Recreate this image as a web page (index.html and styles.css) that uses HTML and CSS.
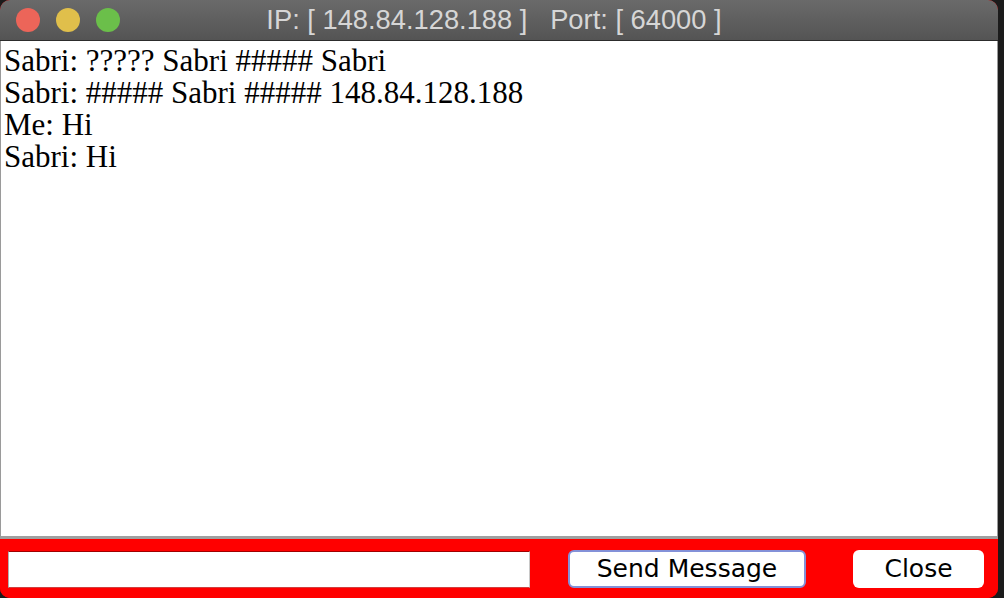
FILE: index.html
```html
<!DOCTYPE html>
<html>
<head>
<meta charset="utf-8">
<link rel="stylesheet" href="styles.css">
</head>
<body>
<div class="window">
  <div class="titlebar">
    <div class="lights">
      <span class="light red"></span>
      <span class="light yellow"></span>
      <span class="light green"></span>
    </div>
    <div class="title">IP: [ 148.84.128.188 ]&nbsp;&nbsp; Port: [ 64000 ]</div>
  </div>
  <div class="chat">
    <div class="line">Sabri: ????? Sabri ##### Sabri</div>
    <div class="line">Sabri: ##### Sabri ##### 148.84.128.188</div>
    <div class="line">Me: Hi</div>
    <div class="line">Sabri: Hi</div>
  </div>
  <div class="bar">
    <div class="field"></div>
    <div class="btn send">Send Message</div>
    <div class="btn close">Close</div>
  </div>
</div>
</body>
</html>
```
FILE: styles.css
```css
html, body {
  margin: 0;
  padding: 0;
  background: #1b1b1b;
  width: 1004px;
  height: 598px;
  overflow: hidden;
}
.window {
  width: 998px;
  height: 598px;
  display: flex;
  flex-direction: column;
  border-radius: 10px;
  overflow: hidden;
  background: #ff0000;
}
.titlebar {
  height: 40px;
  flex: none;
  background: linear-gradient(#6a6a6a, #545454);
  border-bottom: 1px solid #2c2c2c;
  display: flex;
  align-items: center;
  position: relative;
}
.lights {
  display: flex;
  gap: 16px;
  padding-left: 16px;
  position: absolute;
  left: 0;
  top: 8px;
}
.light {
  width: 24px;
  height: 24px;
  border-radius: 50%;
  display: block;
}
.red { background: #ec6559; }
.yellow { background: #e0bf4b; }
.green { background: #6bbf4a; }
.title {
  flex: 1;
  text-align: center;
  padding-right: 10px;
  font-family: "Liberation Sans", Arial, sans-serif;
  font-size: 27.3px;
  color: #d6d6d6;
}
.chat {
  flex: 1;
  background: #ffffff;
  border-left: 1px solid #9a9a9a;
  border-right: 1px solid #9a9a9a;
  border-bottom: 3px solid #a0a0a0;
  padding: 4px 0 0 3px;
  font-family: "Liberation Serif", "Times New Roman", serif;
  font-size: 31px;
  line-height: 32px;
  color: #000;
}
.bar {
  height: 59px;
  flex: none;
  background: #ff0000;
  display: flex;
  align-items: center;
  padding: 0 12px 0 8px;
  box-sizing: border-box;
}
.field {
  width: 520px;
  height: 35px;
  background: #fff;
  border-top: 1px solid #a00000;
  border-left: 1px solid #b0b0b0;
  border-right: 1px solid #c8c8c8;
  border-bottom: 1px solid #d04040;
  margin-top: 1px;
}
.btn {
  height: 38px;
  box-sizing: border-box;
  background: #fff;
  border-radius: 6px;
  display: flex;
  align-items: center;
  justify-content: center;
  font-family: "DejaVu Sans", "Noto Sans", sans-serif;
  font-size: 25px;
  color: #000;
}
.send {
  width: 238px;
  margin-left: 38px;
  border: 2px solid #8391d8;
}
.close {
  width: 131px;
  margin-left: 47px;
}
```
